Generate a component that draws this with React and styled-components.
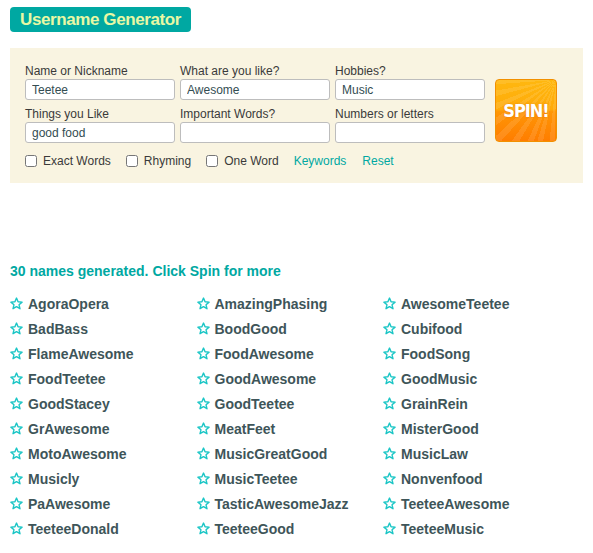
import React, { useState } from 'react'
import styled, { createGlobalStyle } from 'styled-components'

const GlobalStyle = createGlobalStyle`
  body {
    margin: 0;
    background: #fff;
    font-family: "Liberation Sans", Arial, Helvetica, sans-serif;
  }
`

const Page = styled.div`
  padding: 7px 10px 0 10px;
  width: 573px;
`
const TitleBadge = styled.h1`
  display: inline-block;
  margin: 0;
  height: 25px;
  line-height: 25px;
  padding: 0 10px;
  border-radius: 4px;
  background: #00a8a2;
  color: #e9f8a4;
  font-size: 17px;
  font-weight: bold;
  letter-spacing: -0.4px;
`
const Panel = styled.div`
  margin-top: 16px;
  background: #f9f4e1;
  padding: 15px 15px 0 15px;
  height: 120px;
`
const FormRow = styled.div`
  display: flex;
  align-items: flex-start;
`
const Fields = styled.div`
  display: grid;
  grid-template-columns: repeat(3, 150px);
  column-gap: 5px;
  row-gap: 6px;
`
const Field = styled.label`
  display: flex;
  flex-direction: column;
  font-size: 12px;
  color: #3a3a3a;
  line-height: 16px;
`
const TextIn = styled.input`
  box-sizing: border-box;
  width: 150px;
  height: 21px;
  margin: 0;
  padding: 0 6px;
  border: 1px solid #bdbdbd;
  border-radius: 3px;
  background: #fff;
  font-family: inherit;
  font-size: 12px;
  color: #334d52;
  outline: none;
`
const SpinButton = styled.button`
  margin: 16px 0 0 10px;
  width: 62px;
  height: 63px;
  border: 1px solid #f29000;
  border-radius: 4px;
  padding: 0;
  cursor: pointer;
  background:
    repeating-conic-gradient(from 200deg at 100% 0%, rgba(255,255,255,0.1) 0deg 5deg, rgba(255,255,255,0) 5deg 11deg),
    linear-gradient(to bottom, #ffb80f 0%, #ffaa0a 48%, #ff9605 52%, #ff7d00 100%);
  color: #fff;
  font-family: "DejaVu Sans Condensed", "DejaVu Sans", sans-serif;
  font-weight: bold;
  font-size: 18px;
  letter-spacing: -1px;
  text-shadow: 0 0 2px rgba(200, 90, 0, 0.5);
`
const Options = styled.div`
  display: flex;
  align-items: center;
  margin-top: 10px;
  height: 16px;
  font-size: 12px;
`
const Check = styled.label`
  display: flex;
  align-items: center;
  color: #3a3a3a;
  margin-right: 15px;
  input {
    margin: 0 6px 0 0;
    width: 12px;
    height: 12px;
  }
`
const LinkText = styled.a`
  color: #00a8a2;
  text-decoration: none;
  margin-right: 16px;
  cursor: pointer;
`
const Summary = styled.div`
  margin-top: 80px;
  font-size: 14px;
  font-weight: bold;
  color: #00a8a2;
  line-height: 16px;
`
const Names = styled.ul`
  list-style: none;
  margin: 12px 0 0 0;
  padding: 0;
  display: grid;
  grid-template-columns: repeat(3, 186.5px);
  grid-auto-rows: 25px;
`
const Name = styled.li`
  display: flex;
  align-items: center;
  gap: 5px;
  font-size: 14px;
  font-weight: bold;
  color: #3e5559;
`

const Star = () => (
  <svg width='13' height='13' viewBox='0 0 24 24' style={{ flex: 'none' }}>
    <polygon
      points='12,2 14.9,8.9 22.3,9.5 16.7,14.4 18.4,21.6 12,17.8 5.6,21.6 7.3,14.4 1.7,9.5 9.1,8.9'
      fill='none'
      stroke='#1cc6c6'
      strokeWidth='2.6'
      strokeLinejoin='round' />
  </svg>
)

const names = [
  'AgoraOpera', 'AmazingPhasing', 'AwesomeTeetee',
  'BadBass', 'BoodGood', 'Cubifood',
  'FlameAwesome', 'FoodAwesome', 'FoodSong',
  'FoodTeetee', 'GoodAwesome', 'GoodMusic',
  'GoodStacey', 'GoodTeetee', 'GrainRein',
  'GrAwesome', 'MeatFeet', 'MisterGood',
  'MotoAwesome', 'MusicGreatGood', 'MusicLaw',
  'Musicly', 'MusicTeetee', 'Nonvenfood',
  'PaAwesome', 'TasticAwesomeJazz', 'TeeteeAwesome',
  'TeeteeDonald', 'TeeteeGood', 'TeeteeMusic'
]

const App = () => {
  const [form, setForm] = useState({
    name: 'Teetee', like: 'Awesome', hobbies: 'Music',
    things: 'good food', words: '', numbers: ''
  })
  const set = key => e => setForm({ ...form, [key]: e.target.value })

  return (
    <Page>
      <GlobalStyle />
      <TitleBadge>Username Generator</TitleBadge>
      <Panel>
        <FormRow>
          <Fields>
            <Field>Name or Nickname<TextIn value={form.name} onChange={set('name')} /></Field>
            <Field>What are you like?<TextIn value={form.like} onChange={set('like')} /></Field>
            <Field>Hobbies?<TextIn value={form.hobbies} onChange={set('hobbies')} /></Field>
            <Field>Things you Like<TextIn value={form.things} onChange={set('things')} /></Field>
            <Field>Important Words?<TextIn value={form.words} onChange={set('words')} /></Field>
            <Field>Numbers or letters<TextIn value={form.numbers} onChange={set('numbers')} /></Field>
          </Fields>
          <SpinButton>SPIN!</SpinButton>
        </FormRow>
        <Options>
          <Check><input type='checkbox' />Exact Words</Check>
          <Check><input type='checkbox' />Rhyming</Check>
          <Check><input type='checkbox' />One Word</Check>
          <LinkText>Keywords</LinkText>
          <LinkText>Reset</LinkText>
        </Options>
      </Panel>
      <Summary>30 names generated. Click Spin for more</Summary>
      <Names>
        {names.map(n => (
          <Name key={n}><Star />{n}</Name>
        ))}
      </Names>
    </Page>
  )
}

export default App
